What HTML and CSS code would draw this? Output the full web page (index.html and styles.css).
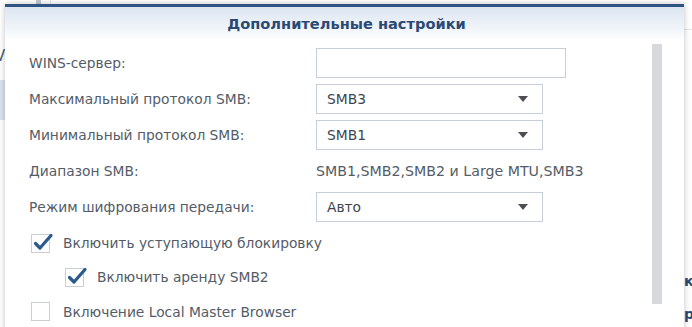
FILE: index.html
```html
<!DOCTYPE html>
<html lang="ru">
<head>
    <meta charset="UTF-8">
    <title>Дополнительные настройки</title>
    <link rel="stylesheet" href="styles.css">
</head>
<body>
    <div class="desktop">
        <div class="bg-bar"></div>
        <div class="bg-line"></div>
        <div class="bg-letter">V</div>
        <div class="bg-tab"></div>
        <div class="bg-rule"></div>
        <div class="bg-word bg-word-1">к</div>
        <div class="bg-word bg-word-2">р</div>

        <div class="dialog">
            <div class="dialog-header">Дополнительные настройки</div>
            <div class="dialog-body">
                <div class="form">
                    <div class="row">
                        <label class="row-label">WINS-сервер:</label>
                        <input class="text-field" type="text">
                    </div>
                    <div class="row">
                        <label class="row-label">Максимальный протокол SMB:</label>
                        <div class="select"><span>SMB3</span><i class="caret"></i></div>
                    </div>
                    <div class="row">
                        <label class="row-label">Минимальный протокол SMB:</label>
                        <div class="select"><span>SMB1</span><i class="caret"></i></div>
                    </div>
                    <div class="row">
                        <label class="row-label">Диапазон SMB:</label>
                        <span class="row-value">SMB1,SMB2,SMB2 и Large MTU,SMB3</span>
                    </div>
                    <div class="row">
                        <label class="row-label">Режим шифрования передачи:</label>
                        <div class="select"><span>Авто</span><i class="caret"></i></div>
                    </div>

                    <div class="checks">
                        <div class="check-row">
                            <span class="check-box">
                                <svg viewBox="0 0 18 18"><polyline points="2.5,9.5 7,14 18,1.5"/></svg>
                            </span>
                            <span>Включить уступающую блокировку</span>
                        </div>
                        <div class="check-row nested">
                            <span class="check-box">
                                <svg viewBox="0 0 18 18"><polyline points="2.5,9.5 7,14 18,1.5"/></svg>
                            </span>
                            <span>Включить аренду SMB2</span>
                        </div>
                        <div class="check-row">
                            <span class="check-box"></span>
                            <span>Включение Local Master Browser</span>
                        </div>
                    </div>
                </div>
                <div class="scrollbar"></div>
            </div>
        </div>
    </div>
</body>
</html>
```

FILE: styles.css
```css
html, body {
    margin: 0;
    padding: 0;
}
body {
    background: #ffffff;
    font-family: "DejaVu Sans", Verdana, sans-serif;
    overflow: hidden;
}
.desktop {
    position: relative;
    width: 692px;
    height: 327px;
    overflow: hidden;
}

/* page behind the dialog */
.bg-bar {
    position: absolute;
    left: 36px;
    top: 0;
    width: 5px;
    height: 12px;
    background: #c3c7cc;
}
.bg-line {
    position: absolute;
    left: 50px;
    top: 0;
    width: 1px;
    height: 12px;
    background: #e2e5e8;
}
.bg-letter {
    position: absolute;
    left: -5px;
    top: 47px;
    font-size: 15px;
    color: #4a5a6e;
}
.bg-tab {
    position: absolute;
    left: 0;
    top: 80px;
    width: 6px;
    height: 40px;
    background: #d9e3ef;
}
.bg-rule {
    position: absolute;
    left: 684px;
    top: 29px;
    width: 8px;
    height: 1px;
    background: #e3e6ea;
}
.bg-word {
    position: absolute;
    left: 684px;
    font-size: 14px;
    font-weight: bold;
    color: #2b4a73;
}
.bg-word-1 { top: 273px; }
.bg-word-2 { top: 306px; }

/* dialog */
.dialog {
    position: absolute;
    left: 5px;
    top: 4px;
    width: 679px;
    height: 340px;
    background: #ffffff;
    border-top: 3px solid #2f5382;
    box-shadow: 0 0 6px rgba(0, 0, 0, 0.25);
    display: flex;
    flex-direction: column;
}
.dialog-header {
    height: 35px;
    line-height: 33px;
    padding-left: 4px;
    text-align: center;
    font-size: 14.6px;
    font-weight: bold;
    color: #2b4a73;
    background: linear-gradient(#dbe5f1, #ffffff);
}
.dialog-body {
    display: flex;
    padding: 2px 22px 0 24px;
}
.form {
    flex: 1;
    padding-top: 4px;
    font-size: 13.8px;
    color: #535c67;
}
.scrollbar {
    width: 10px;
    height: 260px;
    background: #d6d8db;
}

.row {
    display: flex;
    align-items: center;
    height: 30px;
    margin-bottom: 6px;
}
.row-label {
    width: 287px;
}
.row-value {
    font-size: 14.2px;
}
.text-field {
    box-sizing: border-box;
    width: 250px;
    height: 30px;
    border: 1px solid #c6cfd9;
    margin: 0;
    padding: 0 9px;
    font: inherit;
    outline: none;
}
.select {
    box-sizing: border-box;
    width: 227px;
    height: 30px;
    border: 1px solid #c6cfd9;
    display: flex;
    align-items: center;
    justify-content: space-between;
    padding: 0 14px 0 10px;
    color: #3c4550;
}
.caret {
    width: 0;
    height: 0;
    border-left: 5.5px solid transparent;
    border-right: 5.5px solid transparent;
    border-top: 6px solid #4d4f52;
}

.checks {
    margin-top: -2px;
}
.check-row {
    display: flex;
    align-items: center;
    gap: 13px;
    height: 34px;
    padding-left: 2px;
}
.check-row:last-child {
    height: 35px;
}
.check-row.nested {
    padding-left: 36px;
}
.check-box {
    box-sizing: border-box;
    width: 19px;
    height: 19px;
    border: 1px solid #c9ced4;
    background: #ffffff;
    position: relative;
}
.check-box svg {
    position: absolute;
    left: 1px;
    top: -1px;
    width: 18px;
    height: 18px;
    overflow: visible;
}
.check-box polyline {
    fill: none;
    stroke: #2b5a8c;
    stroke-width: 3.2;
    stroke-linecap: round;
    stroke-linejoin: round;
}
```
